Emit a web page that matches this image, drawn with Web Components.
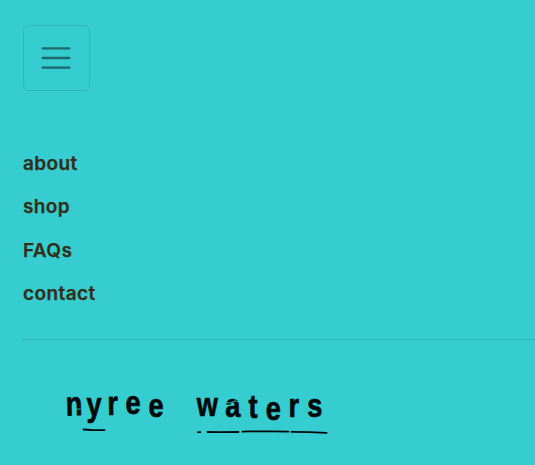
<!DOCTYPE html>
<html lang="en"><head><meta charset="utf-8"><title>nyree waters</title>
<style>body{margin:0;background:#35cdd0;overflow:hidden}</style></head>
<body><site-header></site-header>
<script>
function define(name, html){
  customElements.define(name, class extends HTMLElement{
    constructor(){super();this.attachShadow({mode:'open'}).innerHTML=html;}
  });
}
define('menu-toggle', `<style>:host{display:block;width:67px;height:66px}
button{all:unset;box-sizing:border-box;display:grid;place-items:center;width:67px;height:66px;border:1px solid #30b7b9;border-radius:6px}
svg{display:block}</style>
<button aria-label="Toggle navigation"><svg width="38" height="38" viewBox="0 0 38 38"><path d="M4.7 9.4h26.6M4.7 19h26.6M4.7 28.7h26.6" fill="none" stroke="#1d686a" stroke-width="2.3" stroke-linecap="round"/></svg></button>`);
define('nav-link', `<style>:host{display:block;height:43.4px;font:600 19px/43.4px Inter,sans-serif;letter-spacing:.4px;color:#332d19;-webkit-text-stroke:.25px #332d19}</style><slot></slot>`);
define('brand-logo', `<style>:host{display:block}svg{display:block}
text{font:bold 34px "Liberation Sans",Arial,sans-serif;fill:#030909;stroke:#030909;stroke-width:.7;stroke-linejoin:round}</style>
<svg width="280" height="60" viewBox="60 380 280 60" role="img" aria-label="nyree waters">
<g transform="scale(.8 1)">
<text x="82.6 108 134.3 157 185.6" y="415.8 416 415 414 416.7" rotate="-2 0 -1 0 0">nyree</text>
<text x="246 281.5 310.6 332.3 360.6 384" y="416.5 416.8 418.3 420 417.3 417.5" rotate="0 0 0 0 0 0">waters</text></g>
<g fill="none" stroke="#030909" stroke-width="1.8" stroke-linecap="round"><path d="M83.5 429.5l8 .5 13 .1M198 432.2h2.2M207.5 432l12 .1 19-.1M242.5 431.6l7-.2 22-.1 17 .3M291.5 431.9l18 .3 17 .7"/></g>
<g fill="none" stroke="#35cdd0" stroke-width=".8"><path d="M75.5 409.5l5-.7M226 402.6l4 .4 5-2 4 1M235 400.5l3-3"/></g>
</svg>`);
define('site-header', `<style>:host{display:block;padding:25px 0 0 23px}
nav{margin-top:51px;height:173px}hr{margin:24px 0 0;border:0;height:1px;background:#30b4b6}
brand-logo{margin:40px 0 0 37px}</style>
<menu-toggle></menu-toggle>
<nav><nav-link>about</nav-link><nav-link>shop</nav-link><nav-link>FAQs</nav-link><nav-link>contact</nav-link></nav>
<hr><brand-logo></brand-logo>`);
</script></body></html>
